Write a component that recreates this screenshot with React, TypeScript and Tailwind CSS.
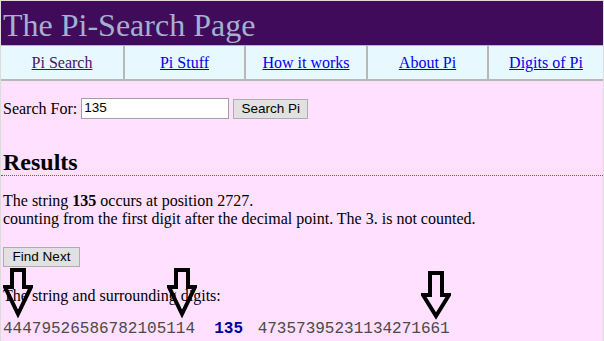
import React from "react";

const serif = { fontFamily: '"Liberation Serif", "Times New Roman", serif' };

function Arrow({ left, top, head, tip }: { left: number; top: number; head: number; tip: number }) {
  const pts = `9,2 21,2 21,${head} 28,${head} 15,${tip} 2,${head} 9,${head}`;
  return (
    <svg
      width="30"
      height="56"
      viewBox="0 0 30 56"
      className="absolute"
      style={{ left, top }}
    >
      <polygon points={pts} fill="none" stroke="#000" strokeWidth="4" strokeLinejoin="miter" strokeMiterlimit="10" />
    </svg>
  );
}

export default function App() {
  const links = ["Pi Search", "Pi Stuff", "How it works", "About Pi", "Digits of Pi"];
  return (
    <div className="relative w-[604px] min-h-[341px] bg-[#ffe0ff] border-t border-l border-r border-[#dcdcdc] overflow-hidden" style={serif}>
      <div className="h-[44px] bg-[#400b5b] pl-[2px] pt-[8px]">
        <h1 className="text-[32px] leading-[32px] text-[#a3b1cf] font-normal" style={serif}>The Pi-Search Page</h1>
      </div>
      <div className="grid grid-cols-[122px_121px_122px_121px_1fr] h-[36px] bg-[#e8f8ff] border-t border-b-2 border-[#b8b8b8]">
        {links.map((l, i) => (
          <div key={l} className={`flex items-center justify-center ${i > 0 ? "border-l-2 border-[#b8b8b8]" : ""}`}>
            <a href="#" className={`text-[16px] underline ${i === 0 ? "text-[#3f1760]" : "text-[#0000ee]"}`}>{l}</a>
          </div>
        ))}
      </div>
      <div className="flex items-center h-[21px] mt-[17px] pl-[2px] text-[16px] text-black">
        <span>Search For:</span>
        <div className="ml-[4px] w-[148px] h-[21px] bg-white border border-[#a0a0a0] flex items-center pl-[2px] text-[13.5px]" style={{ fontFamily: '"Liberation Sans", Arial, sans-serif' }}>135</div>
        <button className="ml-[4px] w-[75px] h-[20px] bg-[#e1e1e1] border border-[#adadad] text-[13.5px] leading-none text-black" style={{ fontFamily: '"Liberation Sans", Arial, sans-serif' }}>Search Pi</button>
      </div>
      <h2 className="mt-[30px] pl-[2px] text-[24px] font-bold leading-[26px] text-black border-b border-dotted border-[#ff2020]" style={serif}>Results</h2>
      <p className="mt-[16px] pl-[2px] text-[16px] leading-[18px] text-black">
        The string <b>135</b> occurs at position 2727.<br />
        counting from the first digit after the decimal point. The 3. is not counted.
      </p>
      <div className="pl-[2px] mt-[16px]">
        <button className="w-[77px] h-[20px] bg-[#e1e1e1] border border-[#adadad] text-[13.5px] leading-none text-black" style={{ fontFamily: '"Liberation Sans", Arial, sans-serif' }}>Find Next</button>
      </div>
      <p className="mt-[19px] pl-[2px] text-[16px] leading-[18px] text-black">The string and surrounding digits:</p>
      <p className="mt-[15px] pl-[2px] text-[16px] leading-[18px] text-[#4a4a4a] whitespace-pre" style={{ fontFamily: '"Liberation Mono", "Courier New", monospace' }}>
        44479526586782105114  <b className="text-[#0000a0]">135</b> <span className="ml-[5px]">47357395231134271661</span>
      </p>
      <Arrow left={2} top={267} head={19} tip={46} />
      <Arrow left={166} top={267} head={19} tip={46} />
      <Arrow left={420} top={270} head={24} tip={45} />
    </div>
  );
}
